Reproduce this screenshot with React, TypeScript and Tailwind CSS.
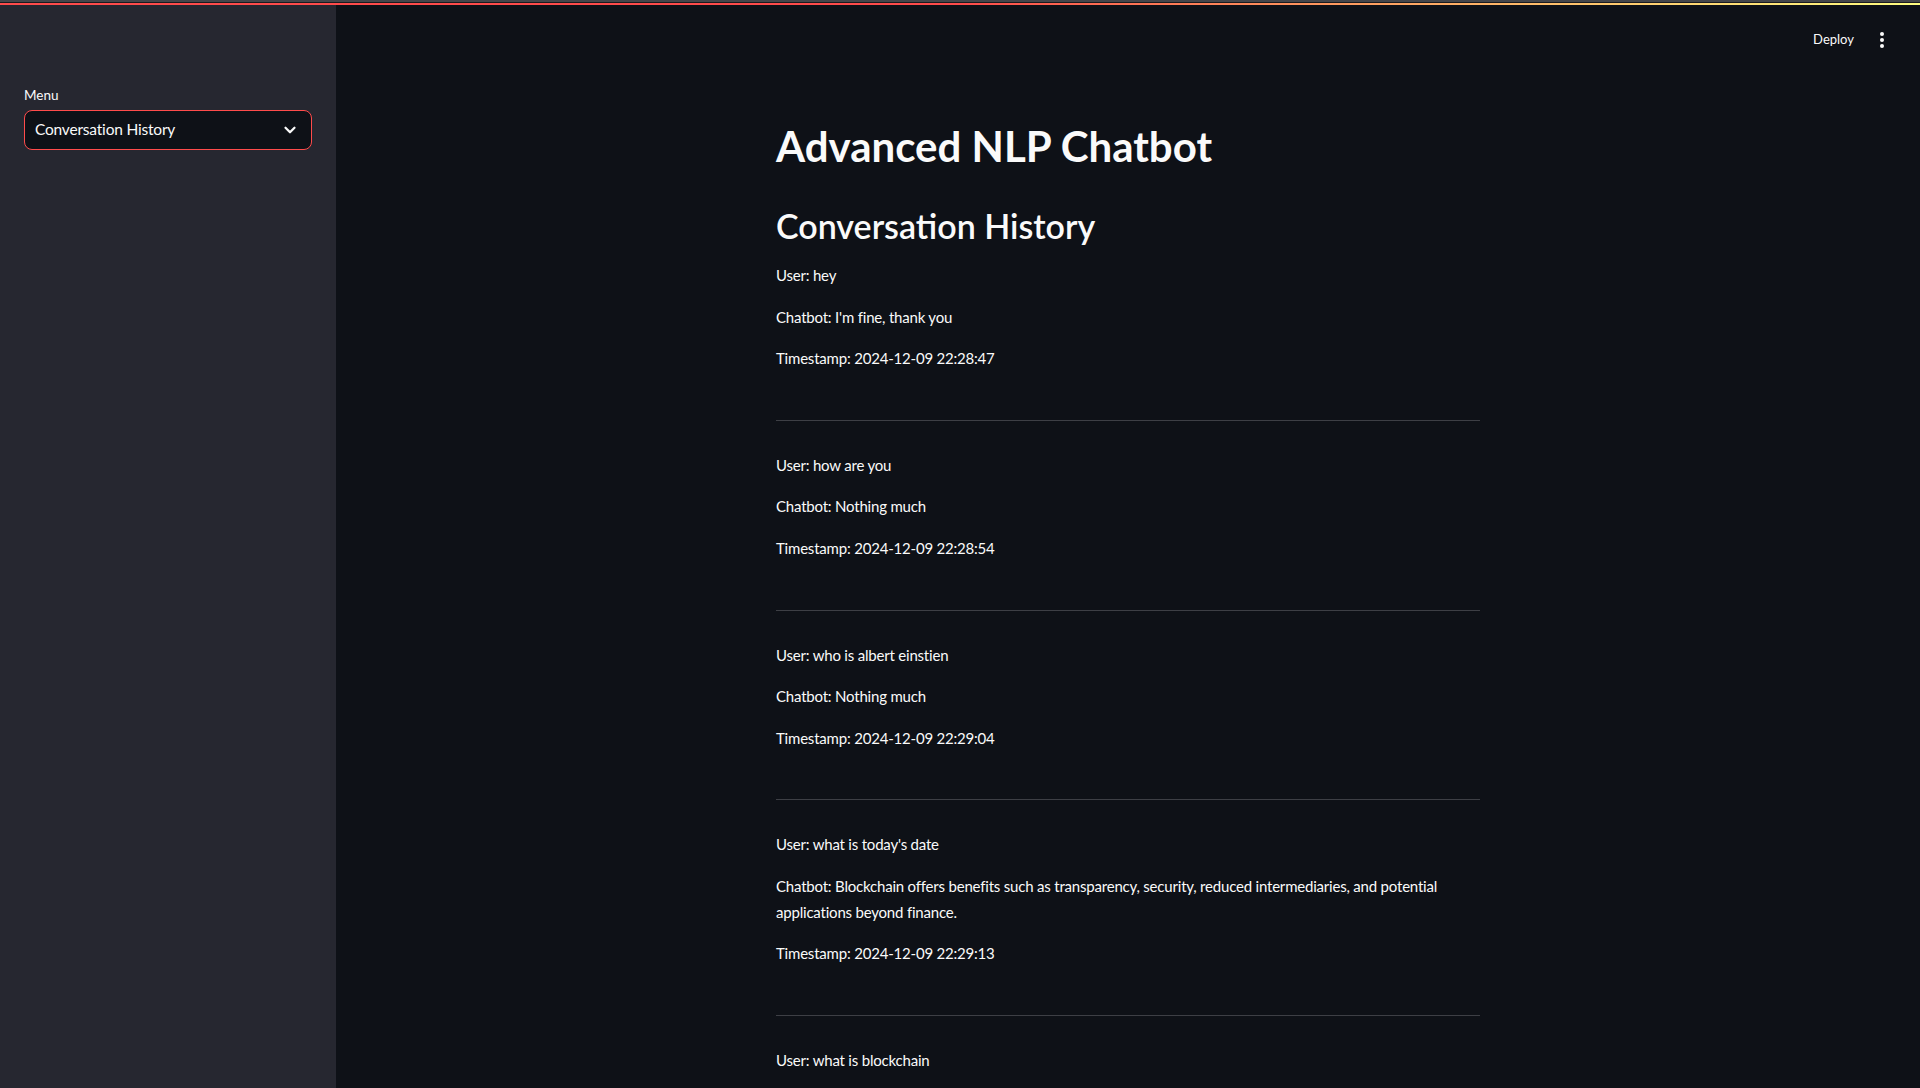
import { ChevronDown } from "lucide-react";

const history = [
  { user: "hey", bot: "I'm fine, thank you", ts: "2024-12-09 22:28:47" },
  { user: "how are you", bot: "Nothing much", ts: "2024-12-09 22:28:54" },
  { user: "who is albert einstien", bot: "Nothing much", ts: "2024-12-09 22:29:04" },
  {
    user: "what is today's date",
    bot: "Blockchain offers benefits such as transparency, security, reduced intermediaries, and potential applications beyond finance.",
    ts: "2024-12-09 22:29:13",
  },
  { user: "what is blockchain", bot: "Blockchain is a decentralized digital ledger", ts: "2024-12-09 22:29:20" },
];

const App = () => {
  return (
    <div
      className="h-[1088px] w-[1920px] overflow-hidden bg-[#0e1117] text-[#fafafa] flex flex-col"
      style={{ fontFamily: '"Lato", "Noto Sans", sans-serif' }}
    >
      {/* top decoration */}
      <div className="h-[2px] bg-[#45464a]" />
      <div className="h-[1px] bg-[#1b1c20]" />
      <div className="h-[2px] bg-gradient-to-r from-[#ff4b4b] via-[#ff4b4b] to-[#fffd80]" />

      <div className="flex flex-1 min-h-0">
        {/* sidebar */}
        <aside className="w-[336px] shrink-0 bg-[#262730] px-6 pt-[79px]">
          <label className="block text-[13.5px] leading-[22px] text-[#fafafa] mb-[4px]">Menu</label>
          <div className="h-[40px] rounded-lg border border-[#ff4b4b] bg-[#0e1117] flex items-center justify-between pl-[10px] pr-[12px]">
            <span className="text-[15.5px] tracking-[-0.2px]">Conversation History</span>
            <ChevronDown size={18} strokeWidth={3} className="text-[#fafafa]" />
          </div>
        </aside>

        {/* main */}
        <main className="flex-1 relative">
          <div className="absolute top-[25px] right-[36px] flex items-center gap-[26px]">
            <span className="text-[13px] text-[#fafafa]">Deploy</span>
            <div className="flex flex-col gap-[2px] items-center">
              <span className="w-[4px] h-[4px] rounded-full bg-[#fafafa]" />
              <span className="w-[4px] h-[4px] rounded-full bg-[#fafafa]" />
              <span className="w-[4px] h-[4px] rounded-full bg-[#fafafa]" />
            </div>
          </div>

          <div className="mx-auto w-[736px] px-4 pt-[115px]">
            <h1 className="text-[42px] font-bold leading-[53px]">Advanced NLP Chatbot</h1>
            <h2 className="mt-[31px] text-[34px] font-semibold leading-[43px]">Conversation History</h2>
            <div className="mt-[16px]">
              {history.map((h, i) => (
                <div key={i}>
                  <div className="flex flex-col gap-4 text-[15px] tracking-[-0.2px] leading-[25.6px]">
                    <p>User: {h.user}</p>
                    <p>Chatbot: {h.bot}</p>
                    <p>Timestamp: {h.ts}</p>
                  </div>
                  <hr className="mt-[48px] mb-[32px] border-0 border-t border-[#3d3f45]" />
                </div>
              ))}
            </div>
          </div>
        </main>
      </div>
    </div>
  );
};

export default App;
